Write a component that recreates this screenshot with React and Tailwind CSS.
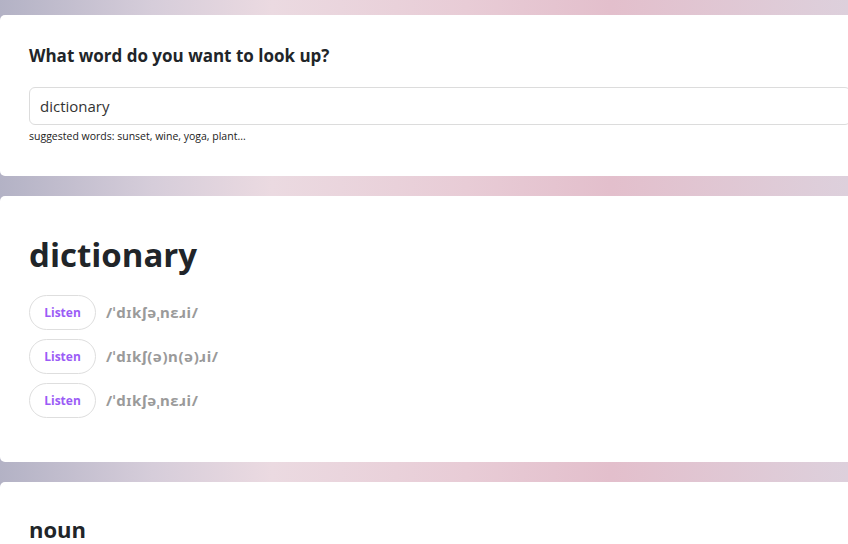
const PHONETICS = ["/ˈdɪkʃəˌnɛɹi/", "/ˈdɪkʃ(ə)n(ə)ɹi/", "/ˈdɪkʃəˌnɛɹi/"];

export default function App() {
  return (
    <div
      className="w-full h-[544px] overflow-hidden bg-[linear-gradient(90deg,#b3b2c5_0%,#d6cdda_18%,#ebdae1_32%,#e8ccd6_55%,#e3bfcc_72%,#ddd0dc_100%)] font-['Open_Sans','Noto_Sans',sans-serif]"
    >
      <div className="w-[880px] pt-[15px] flex flex-col gap-5">
        {/* search */}
        <section className="bg-white rounded-[5px] px-[29px] pt-[30px] pb-[33px]">
          <h2 className="text-[17px] font-bold text-[#212529] leading-[22px]">
            What word do you want to look up?
          </h2>
          <input
            type="text"
            defaultValue="dictionary"
            className="mt-[20px] w-full h-[38px] border border-[#dcdcdc] rounded-[6px] px-[10px] text-[15px] text-[#333] outline-none"
          />
          <p className="mt-[5px] text-[10.5px] text-[#222] leading-[13px]">
            suggested words: sunset, wine, yoga, plant...
          </p>
        </section>

        {/* word */}
        <section className="bg-white rounded-[5px] px-[29px] pt-[33px] pb-[44px]">
          <h1 className="text-[33px] font-bold text-[#212529] leading-[52px]">dictionary</h1>
          <div className="mt-[14px] flex flex-col gap-[9px]">
            {PHONETICS.map((p, i) => (
              <div key={i} className="flex items-center gap-[10px]">
                <button
                  type="button"
                  className="w-[67px] h-[35px] rounded-full border border-[#dedede] bg-white text-[12px] font-bold text-[#9b5cf6]"
                >
                  Listen
                </button>
                <span className="text-[15px] font-bold tracking-[0.6px] text-[#9a9a9a] font-['Noto_Sans','DejaVu_Sans',sans-serif]">
                  {p}
                </span>
              </div>
            ))}
          </div>
        </section>

        {/* meaning */}
        <section className="bg-white rounded-[5px] px-[29px] pt-[33px] pb-10">
          <h3 className="text-[22px] font-bold text-[#212529] leading-[28px]">noun</h3>
        </section>
      </div>
    </div>
  );
}
